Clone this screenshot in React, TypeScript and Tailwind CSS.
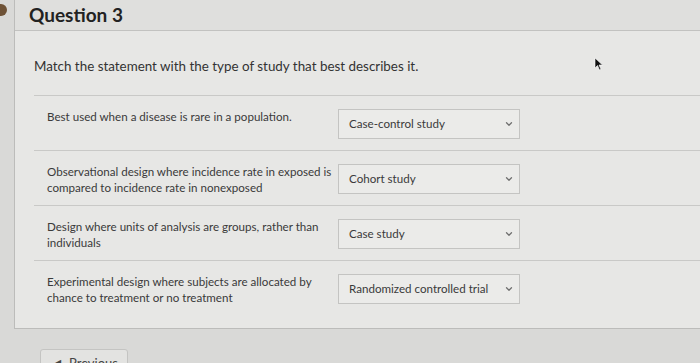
import { ChevronDown } from "lucide-react";

const rows = [
  { text: "Best used when a disease is rare in a population.", answer: "Case-control study" },
  {
    text: "Observational design where incidence rate in exposed is compared to incidence rate in nonexposed",
    answer: "Cohort study",
  },
  { text: "Design where units of analysis are groups, rather than individuals", answer: "Case study" },
  {
    text: "Experimental design where subjects are allocated by chance to treatment or no treatment",
    answer: "Randomized controlled trial",
  },
];

const MatchRow = ({ text, answer, last }: { text: string; answer: string; last: boolean }) => (
  <div className={`flex items-start pt-[13px] ${last ? "h-[67px]" : "h-[55px] border-b border-[#c9c9c7]"}`}>
    <p className="w-[304px] shrink-0 pl-[13px] pr-[4px] text-[11.6px] leading-[15.5px] text-[#3a3a3a]">{text}</p>
    <div className="flex h-[30px] w-[182px] items-center justify-between border border-[#c4c4c2] bg-[#ebebe9] pl-[10px] pr-[5px] text-[11.6px] text-[#3a3a3a]">
      <span>{answer}</span>
      <ChevronDown className="h-[10px] w-[10px] text-[#6f6f6f]" strokeWidth={3} />
    </div>
  </div>
);

export default function App() {
  return (
    <div
      className="relative flex h-[363px] w-[700px] overflow-hidden bg-[#d9d9d7]"
      style={{ fontFamily: "Lato, 'Open Sans', sans-serif" }}
    >
      <div className="w-[14px] shrink-0">
        <div className="ml-[-4px] mt-[4px] h-[12px] w-[11px] rounded-r-full bg-[#6e5236]" />
      </div>
      <div className="flex flex-1 flex-col">
        <div className="border-b border-l border-[#bcbcba] bg-[#e7e7e5]">
          <div className="flex h-[31px] items-center border-b border-[#c2c2c0] bg-[#dfdfdd] pl-[14px]">
            <h2 className="text-[19px] font-bold text-[#222]">Question 3</h2>
          </div>
          <div className="pl-[19px]">
            <p className="border-b border-[#c9c9c7] pb-[20px] pt-[26px] text-[13.4px] leading-[18px] text-[#333]">
              Match the statement with the type of study that best describes it.
            </p>
            {rows.map((r, i) => (
              <MatchRow key={i} text={r.text} answer={r.answer} last={i === rows.length - 1} />
            ))}
          </div>
        </div>
        <div className="pl-[26px] pt-[20px]">
          <button className="flex h-[30px] w-[88px] items-start gap-[8px] rounded-[3px] border border-[#c4c4c2] bg-[#e3e3e1] pl-[14px] pt-[4px] text-[13px] text-[#444]">
            <span className="text-[8px] leading-[16px]">◀</span>
            <span>Previous</span>
          </button>
        </div>
      </div>
      <svg className="absolute left-[594px] top-[57px]" width="10" height="14" viewBox="0 0 10 14">
        <path d="M1 1 L1 11 L3.5 8.5 L5.5 13 L7 12.3 L5 8 L8.5 8 Z" fill="#111" stroke="#fff" strokeWidth="0.6" />
      </svg>
    </div>
  );
}
